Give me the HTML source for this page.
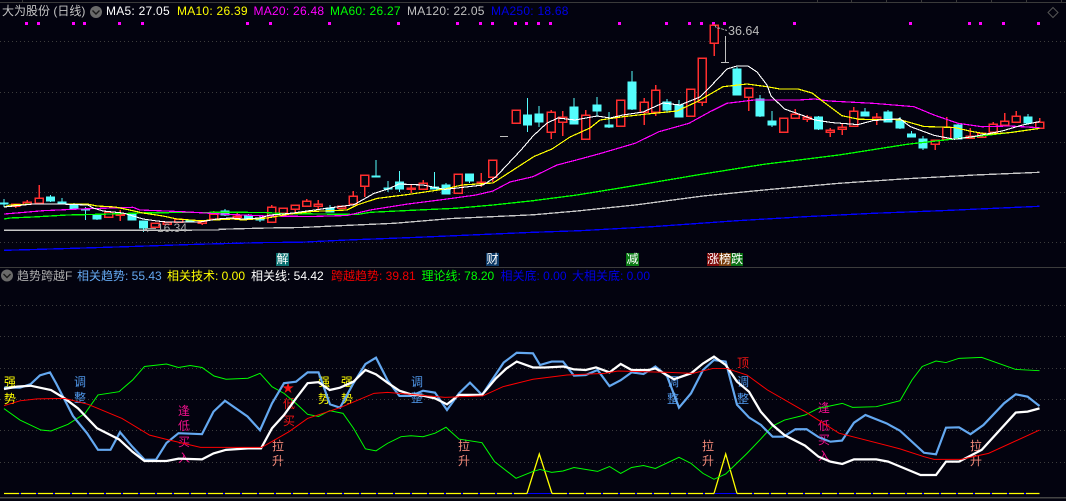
<!DOCTYPE html>
<html><head><meta charset="utf-8"><style>
html,body{margin:0;padding:0;background:#03030f;}
#w{position:relative;width:1066px;height:501px;overflow:hidden;background:#03030f;font-family:"Liberation Sans","Noto Sans CJK SC",sans-serif;font-size:12px;line-height:16px;}
#w span{position:absolute;white-space:nowrap;}
.h{top:3px;letter-spacing:.25px;}
.p{top:268px;}
.b{top:253px;width:13px;height:13px;line-height:13px;text-align:center;color:#fff;}
.l{width:12px;text-align:center;line-height:16px;}
svg{position:absolute;left:0;top:0;}
.y{color:#ffff00}.c{color:#4f96e8}.m{color:#f0108c}.s{color:#f08878}.r{color:#f01414}
</style></head><body><div id="w">
<span class="l y" style="left:4px;top:374px">强</span><span class="l y" style="left:4px;top:391px">势</span>
<span class="l c" style="left:74px;top:374px">调</span><span class="l c" style="left:74px;top:390px">整</span>
<span class="l m" style="left:178px;top:403px">逢</span><span class="l m" style="left:178px;top:418px">低</span><span class="l m" style="left:178px;top:434px">买</span><span class="l m" style="left:178px;top:450px">入</span>
<span class="l r" style="left:282px;top:380px">★</span><span class="l r" style="left:283px;top:396px">低</span><span class="l r" style="left:283px;top:413px">买</span>
<span class="l s" style="left:272px;top:438px">拉</span><span class="l s" style="left:272px;top:453px">升</span>
<span class="l y" style="left:318px;top:374px">强</span><span class="l y" style="left:318px;top:391px">势</span>
<span class="l y" style="left:341px;top:374px">强</span><span class="l y" style="left:341px;top:391px">势</span>
<span class="l c" style="left:411px;top:374px">调</span><span class="l c" style="left:411px;top:390px">整</span>
<span class="l s" style="left:458px;top:438px">拉</span><span class="l s" style="left:458px;top:453px">升</span>
<span class="l c" style="left:667px;top:374px">调</span><span class="l c" style="left:667px;top:391px">整</span>
<span class="l s" style="left:702px;top:438px">拉</span><span class="l s" style="left:702px;top:453px">升</span>
<span class="l r" style="left:737px;top:355px">顶</span>
<span class="l c" style="left:737px;top:374px">调</span><span class="l c" style="left:737px;top:391px">整</span>
<span class="l m" style="left:818px;top:400px">逢</span><span class="l m" style="left:818px;top:418px">低</span><span class="l m" style="left:818px;top:432px">买</span><span class="l m" style="left:818px;top:448px">入</span>
<span class="l s" style="left:970px;top:438px">拉</span><span class="l s" style="left:970px;top:453px">升</span>

<svg width="1066" height="501" viewBox="0 0 1066 501">
<g stroke="#3c3c3c" stroke-width="1" stroke-dasharray="1 3" shape-rendering="crispEdges">
<path d="M0 41.5H1066M0 92.5H1066M0 142.5H1066M0 192.5H1066M0 242.5H1066M0 305.5H1066M0 336.5H1066M0 368.5H1066M0 399.5H1066M0 430.5H1066M0 462.5H1066"/>
</g>
<path d="M0 2.5H1066M22.5 0V2M817.5 0V2M851.5 0V2M886.5 0V2M921.5 0V2M956.5 0V2M991.5 0V2M1026.5 0V2M1061.5 0V2" stroke="#3a3a3a" fill="none" shape-rendering="crispEdges"/>
<path d="M0 267.5H1066" stroke="#3c3c3c" shape-rendering="crispEdges"/>
<path d="M0 497.5H1066" stroke="#444" stroke-width="1.5" shape-rendering="crispEdges"/>

<path fill="#ff00ff" shape-rendering="crispEdges" d="M25 22h3v3h-3zM37 22h3v3h-3zM72 22h3v3h-3zM83 22h3v3h-3zM118 22h3v3h-3zM141 22h3v3h-3zM246 22h3v3h-3zM269 22h3v3h-3zM328 22h3v3h-3zM397 22h3v3h-3zM456 22h3v3h-3zM479 22h3v3h-3zM491 22h3v3h-3zM514 22h3v3h-3zM525 22h3v3h-3zM537 22h3v3h-3zM549 22h3v3h-3zM618 22h3v3h-3zM665 22h3v3h-3zM688 22h3v3h-3zM700 22h3v3h-3zM712 22h3v3h-3zM723 22h3v3h-3zM793 22h3v3h-3zM909 22h3v3h-3zM968 22h3v3h-3zM979 22h3v3h-3zM1002 22h3v3h-3zM1037 22h3v3h-3z"/>
<circle cx="96" cy="12" r="6" fill="#6a6a6a"/><path d="M92.5 10.5L96 14L99.5 10.5" fill="none" stroke="#1a1a1a" stroke-width="1.4"/>
<circle cx="7" cy="275.5" r="6" fill="#6a6a6a"/><path d="M3.5 274L7 277.5L10.5 274" fill="none" stroke="#1a1a1a" stroke-width="1.4"/>
<path d="M1053 7.5L1058 12.5L1053 17.5L1048 12.5Z" fill="none" stroke="#555"/>

<!-- cyan candles -->
<path fill="#54fcfc" stroke="#54fcfc" shape-rendering="crispEdges" d="
M0 203h8V204h-8ZM4 199V207
M46.500 197h8V201h-8ZM50.500 195V202
M58 202h8V204h-8ZM62 198V204
M70 204h8V209h-8ZM74 203V209
M81.500 209h8V210h-8ZM85.500 207V220
M93 215h8V219h-8ZM97 219V220
M128 214h8V220h-8Z
M139.500 221h8V228h-8ZM143.500 228V232
M186 220h8V222h-8Z
M221 211h8V215h-8ZM225 209V216
M244.500 216h8V218h-8ZM248.500 214V219
M256 218h8V220h-8ZM260 216V222
M326 208h8V212h-8ZM330 205V208
M372 176h8V177h-8ZM376 160V177
M384 188h8V189h-8ZM388 181V192
M395.500 182h8V189h-8ZM399.500 171V192
M430.500 187h8V189h-8ZM434.500 172V189
M442 185h8V194h-8ZM446 183V185
M465.500 174h8V181h-8ZM469.500 181V183
M523.500 115h8V125h-8ZM527.500 98V132
M535 114h8V122h-8ZM539 106V127
M570 107h8V124h-8ZM574 98V107
M593 105h8V111h-8ZM597 97V117
M605 125h8V127h-8ZM609 112V128
M628 82h8V109h-8ZM632 71V110
M663 102h8V110h-8ZM667 99V113
M675 105h8V117h-8ZM679 100V105
M733 69h8V95h-8ZM737 67V69
M756 99h8V116h-8ZM760 95V117
M768 121h8V125h-8ZM772 111V127
M814.500 117h8V129h-8ZM818.500 116V130
M861 112h8V116h-8ZM865 108V112
M884 112h8V122h-8ZM888 110V112
M896 121h8V128h-8ZM900 117V129
M907.500 134h8V137h-8ZM911.500 131V134
M919 139h8V148h-8ZM923 136V150
M954 125h8V139h-8ZM958 123V125
M1024 117h8V123h-8ZM1028 114V117"/>

<!-- red candles -->
<path fill="#03030f" stroke="#ff2e2e" stroke-width="1.5" shape-rendering="crispEdges" d="
M11.500 204h8V206h-8ZM15.500 206V208
M23 202h8V204h-8ZM27 200V202
M35 198h8V203h-8ZM39 185V198
M104.500 212h8V217h-8Z
M116 214h8V215h-8ZM120 210V214M120 215V221
M151 223h8V227h-8Z
M163 222h8V224h-8ZM167 224V225
M174.500 219h8V222h-8Z
M198 221h8V223h-8ZM202 223V225
M209.500 214h8V219h-8ZM213.500 211V214
M233 216h8V217h-8ZM237 213V216
M267.500 207h8V222h-8ZM271.500 205V207
M279 208h8V213h-8Z
M291 205h8V209h-8ZM295 209V212
M302.500 201h8V206h-8ZM306.500 199V201
M314 204h8V206h-8ZM318 200V204M318 206V209
M337.500 206h8V208h-8ZM341.500 208V209
M349 196h8V204h-8ZM353 191V196
M360.500 175h8V186h-8ZM364.500 186V197
M407 188h8V189h-8ZM411 184V188M411 189V193
M419 183h8V189h-8ZM423 180V183
M454 174h8V193h-8Z
M477 182h8V183h-8ZM481 173V182M481 183V187
M488.500 160h8V177h-8ZM492.500 177V182
M512 110h8V123h-8Z
M547 112h8V132h-8ZM551 110V112M551 132V139
M558.500 117h8V122h-8ZM562.500 111V117M562.500 122V136
M581.500 115h8V139h-8ZM585.500 110V115
M616.500 100h8V126h-8ZM620.500 126V127
M640 102h8V112h-8ZM644 98V102M644 112V125
M651.500 90h8V112h-8ZM655.500 85V90M655.500 112V116
M686.500 89h8V116h-8Z
M698 58h8V102h-8ZM702 102V106
M710 25h8V43h-8ZM714 24V25M714 43V56
M744.500 88h8V97h-8ZM748.500 97V111
M779.500 118h8V132h-8Z
M791 114h8V118h-8ZM795 109V114
M803 117h8V119h-8ZM807 115V117M807 119V122
M826 130h8V132h-8ZM830 128V130M830 132V137
M838 127h8V129h-8ZM842 124V127M842 129V135
M849.500 111h8V126h-8ZM853.500 107V111
M872.500 117h8V119h-8ZM876.500 113V117M876.500 119V125
M931 140h8V144h-8ZM935 144V150
M942.500 127h8V139h-8ZM946.500 117V127
M966 136h8V138h-8ZM970 128V136
M977.500 133h8V137h-8ZM981.500 137V138
M989 124h8V132h-8ZM993 122V124
M1000.500 121h8V125h-8ZM1004.500 113V121
M1012 116h8V122h-8ZM1016 111V116M1016 122V123
M1035.500 122h8V128h-8ZM1039.500 118V122"/>

<path d="M500 136.500H508M725.500 36V62M721 62.500H729" stroke="#c0c0c0" fill="none" shape-rendering="crispEdges"/>
<path d="M715 25Q716 29 719 28L727 30.500" stroke="#aaa" fill="none" stroke-dasharray="3 1"/>
<path d="M143 231L146 228.500M146 228.500H156M146 228.500L148 232" stroke="#999" fill="none"/>

<!-- moving averages -->
<g fill="none" stroke-width="1.100" shape-rendering="crispEdges">
<polyline stroke="#0000ff" stroke-width="1.300" points="4,250.300 34,249.500 126,246.700 197,244.300 267,242.500 299,242.300 347,240 418,237.300 533,232.300 580,230.700 652,226.700 737,220.700 805,216.700 873,213.300 941,210.700 1039.500,206.300"/>
<polyline stroke="#c8c8c8" stroke-width="1.300" points="4,230.300 143,230.300 219,230 219,229.300 267,228 301,227.500 340,225.700 394,223.300 452,218.500 533,214.800 577,211 635,205 703,196 771,189.300 839,183.300 907,178.700 975,175 1039.500,172.300"/>
<polyline stroke="#00ff00" stroke-width="1.300" points="4,219 10,218 33,217 67,215 100,214.300 150,212.700 230,212.300 265,212.500 282,213.500 357,214.500 370.500,212.300 418,210 455.500,208.300 493,205 533,200.700 577,195 628,186.700 703,174 764,164.300 839,155 907,144.300 951,139.300 1009,132.700 1039.500,128.300"/>
<polyline stroke="#ff00ff" stroke-width="1.200" points="4,214 20,212.700 43,210.700 80,209 133,207.300 140,210 183,211.700 227,214.300 267,216 311,216.500 347,215.500 370,210 408,204 445,199.300 476,195 493,191 510,182 533,176.700 557,165 579,159.300 601,153.300 635,143.300 659,131.700 689,123.300 710,111.700 727,103.300 754,100 798,100 815,99 829,101 873,103.300 914,106.700 934,115 958,123.300 982,126.700 1009,126 1039.500,127.700"/>
<polyline stroke="#ffff00" stroke-width="1.200" points="4,207 10,205 33,204 87,204 97,206 115,207 125,209 143,213 163,216 177,219 200,220.700 233,219 243,220 267,218 290,214 313,211.400 347,210 357,205 377,198.400 408,194.500 445,189 462,185 493,183 510,172 534,156.500 552,149 570,137 590,128 600,120 623,116.700 647,114 677,111 697,101.700 723,86.700 747,84 767,86.700 780,89 798,89 812,93 825,103 842,115.700 859,119.300 900,119.700 924,126.500 954.500,127.500 971.500,131.400 988.500,134.300 1012,132.400 1039.500,128.400"/>
<polyline stroke="#ffffff" points="4,207 33,204 60,204 88,205 93,208 103,211 123,213 133,216 143,219 157,221 167,222 185,222 200,222 217,219 230,218 243,219 260,218 270,215 283,214 293,213 300,212 340,206.500 354,204.700 374,193.400 388,189 399,184 423,185 445,189.400 483,185 496,176.700 521,150 533,136 547,123 558,118 575,120 597,116 610,118 623,115 643,112 663,103 680,105 700,97 710,87 727,69 737,66 748,66 757,72 767,85 771,96 784.500,109 801.500,115 815,120 832,122.600 858,124.600 873,120.600 900,118.700 910,126.500 934,135.300 954.500,139.300 975,136.300 1002,131 1022.500,125 1039.500,121.600"/>
</g>

<!-- lower indicator -->
<path d="M4 493.500H1039.500" stroke="#0000ff" shape-rendering="crispEdges"/>
<polyline fill="none" stroke="#ffff00" stroke-width="1.300" stroke-dasharray="15 2" points="4,493.500 527,493.500"/>
<polyline fill="none" stroke="#ffff00" stroke-width="1.300" points="527,493.500 539.300,454 552,493.500"/>
<polyline fill="none" stroke="#ffff00" stroke-width="1.300" stroke-dasharray="15 2" points="552,493.500 714,493.500"/>
<polyline fill="none" stroke="#ffff00" stroke-width="1.300" points="714,493.500 725.700,454 737,493.500"/>
<polyline fill="none" stroke="#ffff00" stroke-width="1.300" stroke-dasharray="15 2" points="737,493.500 1039.500,493.500"/>
<g fill="none" transform="translate(0,340) scale(1,.9807) translate(0,-340)">
<polyline stroke="#00ff00" stroke-width="1" points="4,410 20,421.600 41,431.800 51,432.800 68,426 85,414.800 98,396 119,392.700 132.600,380.800 144.500,367 166.500,364.500 178.500,368 190.300,366 202,368 214,376.700 226,380 248,379 260,374 272,387.600 284,394.400 296,404.600 307.600,415.800 318.500,418 329.700,412 343,414.800 353.500,430 365.400,451 376,453 387.500,445.400 401,438.600 411,437.600 423,438.600 435,435 446,429 459,441 482,444.700 494.600,464 516,481 533,474 540,472 551.700,475 563,473.600 574,470 597.600,474 609.500,469 620.700,476 631.600,470 643.500,468 655.400,471 679,459.600 691,465.800 703,476 714,482 725.700,476.600 747,455.600 760.700,441 772.600,427.700 784.500,421.600 805,416.500 818.500,409.700 842.300,404.600 852.500,408.700 876.300,408 900,401.900 912,380.800 922.200,367 936,361.400 946,363 959,358.700 981.700,357.700 1015.700,370 1039.500,371.300"/>
<polyline stroke="#64a8f0" stroke-width="2.200" points="4,388.600 20,388.600 30.600,385 40,376 50,373 56,384 73,417.500 87,435 98,452 110.500,452 120,434 132.500,449 144.500,462 156,462 166.500,445 178.500,435 202,436 213.500,413 225,402 247.500,418 260,432 272,404.600 284,384 296,382.500 307.600,373 318.500,373 330,405.600 340,409 353.500,384 365.400,364.500 376,358 387.500,381 399.400,397 411,397 423,391.700 435,393.700 447,411.400 459,394.400 470,383.500 482,396 503.700,363 516.700,353 533,353.600 540,365.500 551.700,362 563,362 574,376.400 585.700,375.700 597.600,370.600 609.500,387 620.700,381 631.600,373 643.500,374.700 655.400,367 667,376.700 679,409 691,394.400 703,370.600 714,360.400 725.700,362 737,406 749,419 761,426.700 772.600,438.600 783.500,438.600 795.400,431 806.600,431 818.500,439 830.400,443.700 842,442.600 854,424.300 865.400,416.500 886.500,425 900,432.500 924,455 936,456.600 946,429.400 959,429 970.500,436 983.400,426.700 1004,404.600 1015.700,395.400 1027.600,397.800 1039.500,407.300"/>
<polyline stroke="#ffffff" stroke-width="2.300" points="4,390 17,387.600 30.600,386.600 51,391 64.600,399.500 78,409.700 97,430 119,441.300 132.500,454 144.500,463.400 166.500,463.400 178.500,461 202,461.700 213.500,455.600 226,452 248,450.500 261,450.500 272,430 284,416.500 296,399.500 307.600,384 318.500,383 329.700,391 340,388.600 353.500,382.500 365.400,370.600 376,375 387.500,383.500 399.400,391.700 411,395.400 423,396.800 435,399.500 447,405.600 459,396 482,396 496,379 506.500,369 516.700,362 533,368 545,368 563.600,367 574,370 585.700,370.600 596,368 609.500,373 620.700,364.500 631.600,370.600 648.600,370.600 655.400,369 674,380 691,374 703,364 714,357 725.700,365.500 737,382.500 749,392.700 760.700,413 772.600,426.700 784.500,437 805,447.700 818.500,459 830.400,464 842.300,466.400 854,461.700 876.300,461.700 888.200,464 920.500,477.700 936,477.700 946,464 959,464 981.700,452 1015.700,414 1027.600,413 1039.500,409.700"/>
<polyline stroke="#ff0000" stroke-width="1" points="4,407 20,402 37,400 64.600,399.500 88,405.600 122,420 149.600,437 166.500,441.300 200.500,449.500 261.700,449.500 289,433.500 307.600,420 340,409 374,394.400 387.500,393.400 411,395.400 445,398.500 482.700,397 503,387.600 533,380 567,375.700 604.400,374 618,371.600 669,373 692.800,374 713,369 726.700,369 747,375.700 767.500,391 805,413 839,435 900,451 924,459 934,461.700 961,461.700 988.500,455.600 1039.500,431.800"/>
</g>
</svg>

<span class="h" style="left:2px;color:#c4c4c4;letter-spacing:0">大为股份 (日线)</span>
<span class="h" style="left:106px;color:#fff">MA5: 27.05</span>
<span class="h" style="left:177px;color:#ffff00">MA10: 26.39</span>
<span class="h" style="left:253.500px;color:#ff00ff">MA20: 26.48</span>
<span class="h" style="left:330px;color:#00ff00">MA60: 26.27</span>
<span class="h" style="left:407px;color:#c0c0c0">MA120: 22.05</span>
<span class="h" style="left:491px;color:#0000e6">MA250: 18.68</span>
<span style="left:728px;top:23px;color:#bbb;font-size:12.500px">36.64</span>
<span style="left:157px;top:220px;color:#a8a8a8;font-size:12px">16.34</span>

<span class="b" style="left:276px;background:#0a7070">解</span>
<span class="b" style="left:486px;background:#0c3a68">财</span>
<span class="b" style="left:626px;background:#0a7a14">减</span>
<span class="b" style="left:707px;width:12px;background:#800a0a">涨</span>
<span class="b" style="left:719px;width:12px;background:#7a4010">榜</span>
<span class="b" style="left:731px;width:12px;background:#0a7014">跌</span>

<span class="p" style="left:17px;color:#ababab">趋势跨越F</span>
<span class="p" style="left:77px;color:#64a8f0">相关趋势: 55.43</span>
<span class="p" style="left:167px;color:#ffff00">相关技术: 0.00</span>
<span class="p" style="left:251px;color:#fff">相关线: 54.42</span>
<span class="p" style="left:331px;color:#f00000">跨越趋势: 39.81</span>
<span class="p" style="left:421.500px;color:#00ff00">理论线: 78.20</span>
<span class="p" style="left:500.500px;color:#0000e6">相关底: 0.00</span>
<span class="p" style="left:572px;color:#0000e6">大相关底: 0.00</span>
</div></body></html>
